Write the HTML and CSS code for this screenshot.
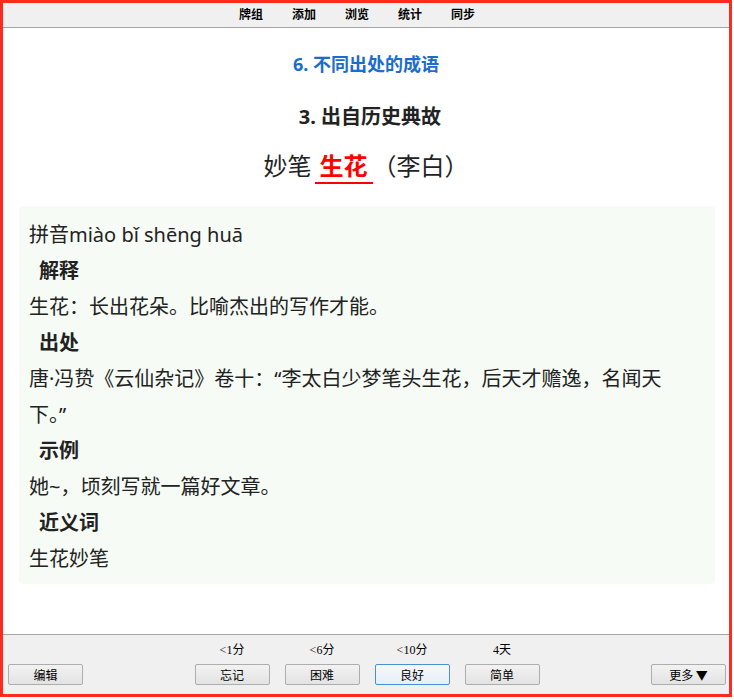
FILE: index.html
```html
<!DOCTYPE html>
<html lang="zh-CN">
<head>
  <meta charset="UTF-8" />
  <meta name="viewport" content="width=device-width, initial-scale=1.0"/>
  <title>妙笔生花</title>
  <link rel="stylesheet" href="styles.css">
</head>
<body>

  <div class="window">
    <div class="toolbar">
      <a href="#">牌组</a>
      <a href="#">添加</a>
      <a href="#">浏览</a>
      <a href="#">统计</a>
      <a href="#">同步</a>
    </div>

    <div class="main">
      <div class="deck">6. 不同出处的成语</div>
      <div class="topic">3. 出自历史典故</div>
      <div class="word">妙笔<span class="key">生花</span>（李白）</div>

      <div class="card">
        <div class="line">拼音miào bǐ shēng huā</div>
        <div class="label">解释</div>
        <div class="line">生花：长出花朵。比喻杰出的写作才能。</div>
        <div class="label">出处</div>
        <div class="line">唐·冯贽《云仙杂记》卷十：“李太白少梦笔头生花，后天才赡逸，名闻天下。”</div>
        <div class="label">示例</div>
        <div class="line">她~，顷刻写就一篇好文章。</div>
        <div class="label">近义词</div>
        <div class="line">生花妙笔</div>
      </div>
    </div>

    <div class="answer-bar">
      <div class="side">
        <button class="btn">编辑</button>
      </div>
      <div class="ease">
        <div class="ease-col">
          <span class="due">&lt;1分</span>
          <button class="btn">忘记</button>
        </div>
        <div class="ease-col">
          <span class="due">&lt;6分</span>
          <button class="btn">困难</button>
        </div>
        <div class="ease-col">
          <span class="due">&lt;10分</span>
          <button class="btn default">良好</button>
        </div>
        <div class="ease-col">
          <span class="due">4天</span>
          <button class="btn">简单</button>
        </div>
      </div>
      <div class="side right">
        <button class="btn">更多 ▼</button>
      </div>
    </div>
  </div>

</body>
</html>
```

FILE: styles.css
```css
body {
  margin: 0;
  background: #fff;
  font-family: "Noto Sans", "Noto Sans CJK SC", sans-serif;
  color: #222;
}
.window {
  width: 732px;
  height: 697px;
  box-sizing: border-box;
  border: 3px solid #ff2a1f;
  display: flex;
  flex-direction: column;
}
.toolbar {
  height: 24px;
  background: #f0f0f0;
  border-bottom: 1px solid #a5a5a5;
  display: flex;
  justify-content: center;
  align-items: center;
  gap: 29px;
  padding-right: 18px;
}
.toolbar a {
  font-family: "Noto Sans CJK SC", sans-serif;
  font-size: 12px;
  font-weight: bold;
  color: #000;
  text-decoration: none;
  line-height: 16px;
  margin-top: -3px;
}
.main {
  flex: 1;
  background: #fff;
  overflow: hidden;
}
.deck {
  margin-top: 24px;
  text-align: center;
  font-size: 18px;
  font-weight: bold;
  line-height: 24px;
  color: #1a6dcc;
}
.topic {
  margin-top: 27px;
  padding-left: 8px;
  text-align: center;
  font-size: 20px;
  font-weight: bold;
  line-height: 28px;
}
.word {
  margin-top: 17px;
  text-align: center;
  font-size: 24px;
  line-height: 36px;
}
.key {
  margin-left: 3px;
  padding: 0 5px;
  color: #f00;
  font-weight: bold;
  border-bottom: 2px solid #f00;
}
.card {
  margin: 22px 14px 0 16px;
  padding: 11px 30px 7px 10px;
  background: #f6fbf5;
  border-radius: 4px;
  font-size: 20px;
  line-height: 36px;
}
.label {
  padding-left: 10px;
  font-weight: bold;
}
.answer-bar {
  height: 60px;
  box-sizing: border-box;
  background: #f0f0f0;
  border-top: 1px solid #a5a5a5;
  display: grid;
  grid-template-columns: 1fr auto 1fr;
  align-items: end;
  padding: 0 3px 9px 5px;
}
.side.right {
  text-align: right;
}
.ease {
  display: flex;
  gap: 15px;
}
.ease-col {
  display: flex;
  flex-direction: column;
  align-items: center;
  gap: 6px;
}
.due {
  font-family: "Liberation Serif", "Noto Sans CJK SC", serif;
  font-size: 12px;
  line-height: 16px;
  color: #000;
}
.btn {
  width: 75px;
  height: 21px;
  padding: 0;
  border: 1px solid #adadad;
  border-radius: 2px;
  background: linear-gradient(#f2f2f2, #e3e3e3);
  font-family: "Noto Sans CJK SC", sans-serif;
  font-size: 12px;
  color: #000;
  cursor: pointer;
}
.btn.default {
  border-color: #4c8fd6;
  background: linear-gradient(#f4f8fc, #e6eef7);
}
```
